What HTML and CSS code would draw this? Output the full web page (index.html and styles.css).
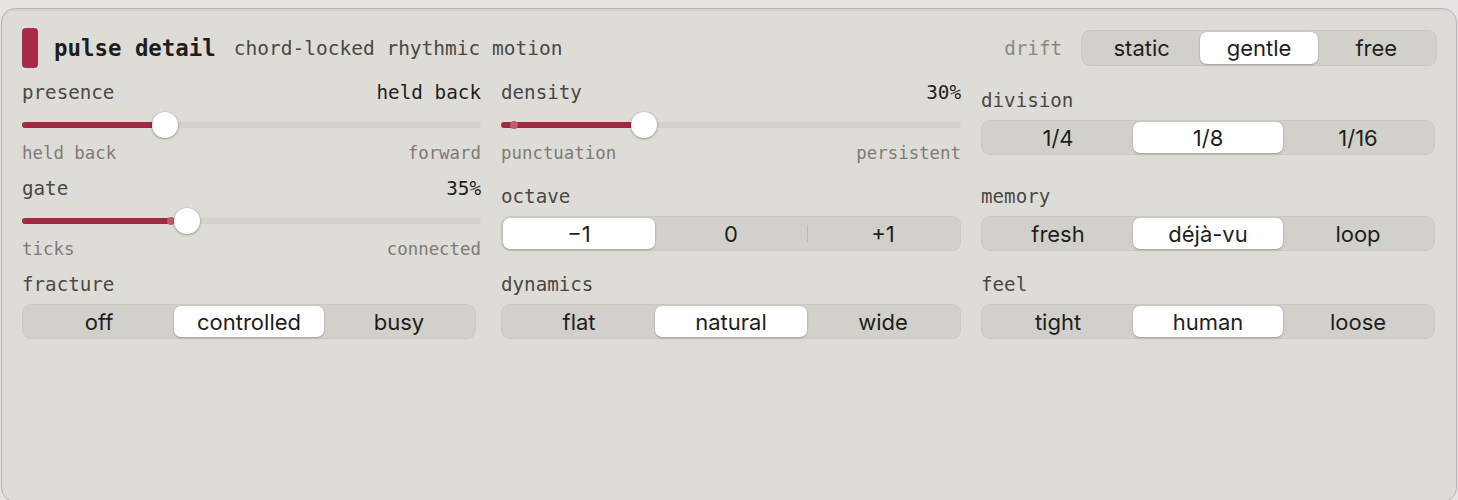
FILE: index.html
```html
<!DOCTYPE html>
<html lang="en">
<head>
    <meta charset="UTF-8">
    <meta name="viewport" content="width=device-width, initial-scale=1.0">
    <title>pulse detail</title>
    <link rel="stylesheet" href="styles.css">
</head>
<body>
    <div class="panel">
        <div class="head">
            <span class="swatch"></span>
            <h1 class="title">pulse detail</h1>
            <span class="subtitle">chord-locked rhythmic motion</span>
            <div class="drift">
                <span class="drift-label">drift</span>
                <div class="seg seg-drift">
                    <button>static</button>
                    <button class="on">gentle</button>
                    <button>free</button>
                </div>
            </div>
        </div>

        <div class="grid">
            <!-- row 1 -->
            <div class="slider">
                <div class="row"><span class="label">presence</span><span class="value">held back</span></div>
                <div class="track" style="--v:0.3">
                    <div class="fill"></div>
                    <span class="thumb"></span>
                </div>
                <div class="ends"><span>held back</span><span>forward</span></div>
            </div>
            <div class="slider">
                <div class="row"><span class="label">density</span><span class="value">30%</span></div>
                <div class="track" style="--v:0.3">
                    <div class="fill"></div>
                    <span class="mark" style="--m:0"></span>
                    <span class="thumb"></span>
                </div>
                <div class="ends"><span>punctuation</span><span>persistent</span></div>
            </div>
            <div class="field">
                <span class="label">division</span>
                <div class="seg">
                    <button>1/4</button>
                    <button class="on">1/8</button>
                    <button>1/16</button>
                </div>
            </div>

            <!-- row 2 -->
            <div class="slider">
                <div class="row"><span class="label">gate</span><span class="value">35%</span></div>
                <div class="track" style="--v:0.35">
                    <div class="fill"></div>
                    <span class="mark" style="--m:0.315"></span>
                    <span class="thumb"></span>
                </div>
                <div class="ends"><span>ticks</span><span>connected</span></div>
            </div>
            <div class="field">
                <span class="label">octave</span>
                <div class="seg">
                    <button class="on">&minus;1</button>
                    <button>0</button>
                    <button>+1</button>
                </div>
            </div>
            <div class="field">
                <span class="label">memory</span>
                <div class="seg">
                    <button>fresh</button>
                    <button class="on">déjà-vu</button>
                    <button>loop</button>
                </div>
            </div>

            <!-- row 3 -->
            <div class="field">
                <span class="label">fracture</span>
                <div class="seg seg-short">
                    <button>off</button>
                    <button class="on">controlled</button>
                    <button>busy</button>
                </div>
            </div>
            <div class="field">
                <span class="label">dynamics</span>
                <div class="seg">
                    <button>flat</button>
                    <button class="on">natural</button>
                    <button>wide</button>
                </div>
            </div>
            <div class="field">
                <span class="label">feel</span>
                <div class="seg">
                    <button>tight</button>
                    <button class="on">human</button>
                    <button>loose</button>
                </div>
            </div>
        </div>
    </div>
</body>
</html>
```

FILE: styles.css
```css
body
{
    margin: 0;
    padding: 8px 1px 0;
    background: #e6e5e1;
    font-family: "DejaVu Sans Mono", "Liberation Mono", monospace;
    color: #222;
}
.panel
{
    box-sizing: border-box;
    height: 494px;
    padding: 19px 19px 0 20px;
    background: #dedcd7;
    border: 1px solid #b8b6b1;
    border-radius: 14px;
    box-shadow: inset 0 2px 2px rgba(0, 0, 0, 0.04);
}

/* header */
.head
{
    display: flex;
    align-items: center;
    height: 40px;
    margin-bottom: 13px;
}
.swatch
{
    width: 16px;
    height: 40px;
    border-radius: 4px;
    background: #a92a4a;
    margin-right: 16px;
}
.title
{
    margin: 0 18px 0 0;
    font-size: 22.4px;
    font-weight: bold;
    color: #1d1d1d;
}
.subtitle
{
    font-size: 19.5px;
    color: #4a4846;
}
.drift
{
    margin-left: auto;
    display: flex;
    align-items: center;
    gap: 19px;
}
.drift-label
{
    font-size: 19.2px;
    color: #8a8884;
}

/* controls grid */
.grid
{
    display: grid;
    grid-template-columns: 459px 460px 454px;
    column-gap: 20px;
    row-gap: 14px;
    align-items: center;
}
.label
{
    font-size: 19.2px;
    line-height: 24px;
    color: #4a4846;
}
.value
{
    font-size: 19.3px;
    line-height: 24px;
    color: #1f1f1f;
}
.row, .ends
{
    display: flex;
    justify-content: space-between;
}
.ends
{
    font-size: 17.4px;
    line-height: 20px;
    color: #7d7b77;
}

/* slider */
.track
{
    position: relative;
    height: 6px;
    margin: 17px 0 15px;
    border-radius: 3px;
    background: #d3d1cc;
}
.fill
{
    height: 100%;
    width: calc(13px + var(--v) * (100% - 26px));
    border-radius: 3px;
    background: #a3283f;
}
.mark
{
    position: absolute;
    top: -1px;
    left: calc(9px + var(--m) * (100% - 26px));
    width: 8px;
    height: 8px;
    border-radius: 50%;
    background: #c4566e;
}
.thumb
{
    position: absolute;
    top: -10px;
    left: calc(var(--v) * (100% - 26px));
    width: 26px;
    height: 26px;
    border-radius: 50%;
    background: #fff;
    box-shadow: 0 1px 3px rgba(0, 0, 0, 0.3), 0 0 0 0.5px rgba(0, 0, 0, 0.08);
}

/* segmented */
.field
{
    display: flex;
    flex-direction: column;
}
.seg
{
    display: flex;
    box-sizing: border-box;
    height: 35px;
    margin-top: 7px;
    padding: 2px;
    border-radius: 9px;
    background: #d2d0cb;
    box-shadow: inset 0 0 0 1px rgba(0, 0, 0, 0.03);
}
.seg-drift
{
    width: 356px;
    height: 36px;
    margin-top: 0;
}
.seg-short
{
    width: 454px;
}
.seg button
{
    position: relative;
    flex: 1;
    border: none;
    background: none;
    border-radius: 7px;
    font-family: Inter, "Liberation Sans", sans-serif;
    font-size: 22px;
    color: #1e1e1e;
    padding: 0;
}
.seg button.on
{
    background: #fff;
    box-shadow: 0 1px 2px rgba(0, 0, 0, 0.22), 0 0 0 0.5px rgba(0, 0, 0, 0.06);
}
.seg button:not(.on) + button:not(.on)::before
{
    content: "";
    position: absolute;
    left: 0;
    top: 7px;
    bottom: 7px;
    width: 1px;
    background: #bcbab5;
}
```
